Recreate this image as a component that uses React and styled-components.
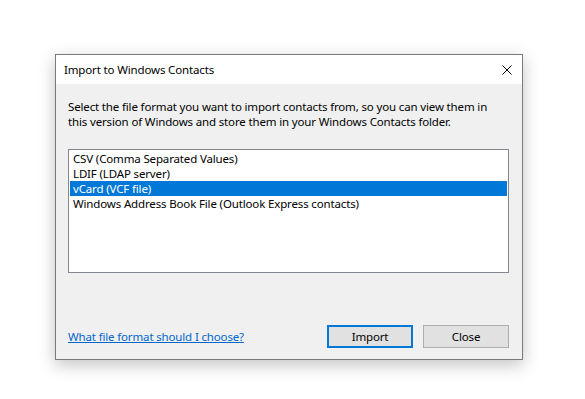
import React, { useState } from 'react';
import styled, { createGlobalStyle } from 'styled-components';

const GlobalStyle = createGlobalStyle`
  html, body {
    margin: 0;
    padding: 0;
    background: #ffffff;
  }
  body {
    font-family: "Noto Sans", "Open Sans", sans-serif;
    font-size: 11.5px;
    letter-spacing: -0.15px;
    color: #000;
  }
`;

const Desktop = styled.div`
  width: 585px;
  height: 399px;
  padding: 54px 0 0 55px;
  box-sizing: border-box;
`;

const Window = styled.div`
  width: 468px;
  height: 306px;
  box-sizing: border-box;
  border: 1px solid #7a7a7a;
  background: #f0f0f0;
  box-shadow: 0 5px 16px rgba(0, 0, 0, 0.24);
  display: flex;
  flex-direction: column;
`;

const TitleBar = styled.div`
  height: 29px;
  background: #ffffff;
  display: flex;
  align-items: center;
  justify-content: space-between;
  padding-left: 8px;
`;

const Title = styled.span`
  line-height: 15px;
`;

const CloseX = styled.button`
  width: 30px;
  height: 29px;
  border: none;
  background: transparent;
  display: flex;
  align-items: center;
  justify-content: center;
  padding: 0;
`;

const Body = styled.div`
  flex: 1;
  display: flex;
  flex-direction: column;
  padding: 15px 13px 11px 12px;
`;

const Description = styled.p`
  margin: 0 0 20px 0;
  line-height: 15px;
`;

const ListBox = styled.ul`
  list-style: none;
  margin: 0;
  height: 124px;
  box-sizing: border-box;
  border: 1px solid #828790;
  background: #ffffff;
  padding: 1px 1px;
`;

const Item = styled.li`
  height: 15px;
  line-height: 15px;
  padding-left: 3px;
  white-space: nowrap;
  overflow: hidden;
  background: ${p => (p.$selected ? '#0078d7' : 'transparent')};
  color: ${p => (p.$selected ? '#ffffff' : '#000000')};
`;

const Footer = styled.div`
  margin-top: auto;
  display: flex;
  align-items: center;
`;

const HelpLink = styled.a`
  color: #0066cc;
  text-decoration: underline;
  cursor: pointer;
`;

const Buttons = styled.div`
  margin-left: auto;
  display: flex;
  gap: 10px;
`;

const Button = styled.button`
  width: 86px;
  height: 23px;
  box-sizing: border-box;
  font-family: inherit;
  font-size: 11.5px;
  letter-spacing: -0.15px;
  color: #000;
  background: #e1e1e1;
  border: ${p => (p.$default ? '2px solid #0078d7' : '1px solid #adadad')};
  padding: 0;
`;

const formats = [
  'CSV (Comma Separated Values)',
  'LDIF (LDAP server)',
  'vCard (VCF file)',
  'Windows Address Book File (Outlook Express contacts)',
];

export default function App() {
  const [selected, setSelected] = useState(2);
  return (
    <>
      <GlobalStyle />
      <Desktop>
        <Window>
          <TitleBar>
            <Title>Import to Windows Contacts</Title>
            <CloseX aria-label="Close">
              <svg width="10" height="10" viewBox="0 0 10 10">
                <path d="M0.5 0.5 L9.5 9.5 M9.5 0.5 L0.5 9.5" stroke="#000" strokeWidth="1" fill="none" />
              </svg>
            </CloseX>
          </TitleBar>
          <Body>
            <Description>
              Select the file format you want to import contacts from, so you can view them in
              <br />
              this version of Windows and store them in your Windows Contacts folder.
            </Description>
            <ListBox>
              {formats.map((f, i) => (
                <Item key={f} $selected={i === selected} onClick={() => setSelected(i)}>
                  {f}
                </Item>
              ))}
            </ListBox>
            <Footer>
              <HelpLink>What file format should I choose?</HelpLink>
              <Buttons>
                <Button $default>Import</Button>
                <Button>Close</Button>
              </Buttons>
            </Footer>
          </Body>
        </Window>
      </Desktop>
    </>
  );
}
